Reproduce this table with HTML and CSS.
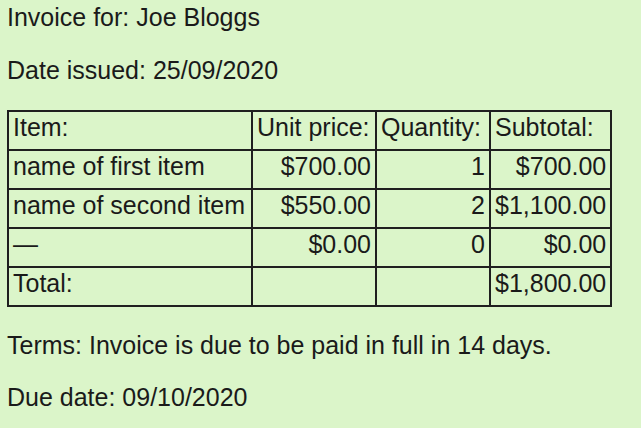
FILE: index.html
```html
<!DOCTYPE html>
<html>
<head>
<meta charset="utf-8">
<link rel="stylesheet" href="styles.css">
</head>
<body>
<div class="invoice">
  <p class="line">Invoice for: Joe Bloggs</p>
  <p class="line line-before-table">Date issued: 25/09/2020</p>
  <table class="items">
    <colgroup>
      <col class="c-item">
      <col class="c-price">
      <col class="c-qty">
      <col class="c-sub">
    </colgroup>
    <tr><td>Item:</td><td>Unit price:</td><td>Quantity:</td><td>Subtotal:</td></tr>
    <tr><td>name of first item</td><td class="num">$700.00</td><td class="num">1</td><td class="num">$700.00</td></tr>
    <tr><td>name of second item</td><td class="num">$550.00</td><td class="num">2</td><td class="num">$1,100.00</td></tr>
    <tr><td>—</td><td class="num">$0.00</td><td class="num">0</td><td class="num">$0.00</td></tr>
    <tr><td>Total:</td><td></td><td></td><td class="num">$1,800.00</td></tr>
  </table>
  <p class="line line-terms">Terms: Invoice is due to be paid in full in 14 days.</p>
  <p class="line">Due date: 09/10/2020</p>
</div>
</body>
</html>
```
FILE: styles.css
```css
html, body {
  margin: 0;
  background: #dbf5c9;
}
body {
  font-family: "Liberation Sans", Arial, sans-serif;
  font-size: 25px;
  line-height: 28px;
  color: #1a1a1a;
}
.invoice {
  padding: 3px 7px;
}
.line {
  margin: 0 0 25px 0;
}
.line-before-table {
  margin-bottom: 26px;
}
.line-terms {
  margin-bottom: 24px;
}
.items {
  border-collapse: collapse;
  table-layout: fixed;
  margin-bottom: 24px;
}
.c-item { width: 244px; }
.c-price { width: 124px; }
.c-qty { width: 114px; }
.c-sub { width: 121px; }
.items td {
  border: 2px solid #1f1f1f;
  padding: 1px 4px 8px 4px;
  line-height: 28px;
  white-space: nowrap;
}
.items td.num {
  text-align: right;
}
```
